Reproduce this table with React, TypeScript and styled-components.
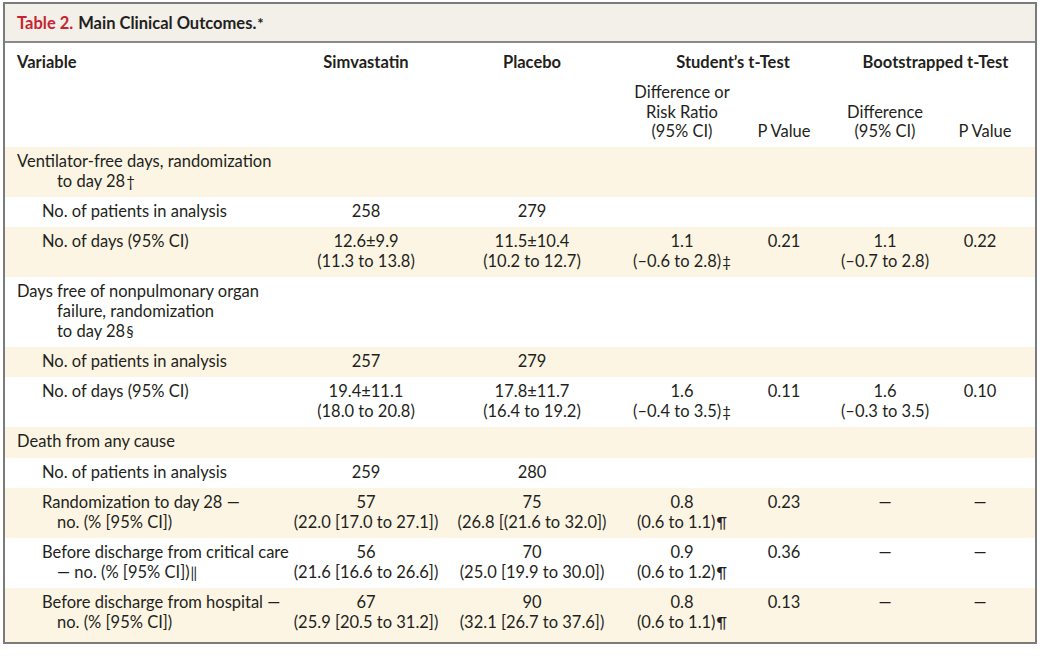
import React from 'react';
import styled, { createGlobalStyle } from 'styled-components';

const GlobalStyle = createGlobalStyle`
  html, body {
    margin: 0;
    padding: 0;
    background: #ffffff;
  }
  body {
    font-family: 'Lato', 'Liberation Sans', sans-serif;
    color: #231f20;
  }
`;

type Level = 'top' | 'sub';

interface RowData {
  level: Level;
  label: React.ReactNode;
  values?: React.ReactNode[];
}

const Frame = styled.div`
  box-sizing: border-box;
  width: 1034px;
  margin: 2px 0 0 3px;
  border: 2px solid #7b7b7b;
  background: #ffffff;
`;

const TitleBar = styled.div`
  box-sizing: border-box;
  height: 39px;
  padding: 0 12px;
  display: flex;
  align-items: center;
  background: #f3efe9;
  border-bottom: 2px solid #8a8a8a;
  font-size: 16.5px;
  font-weight: 700;
  color: #231f20;
`;

const TableNo = styled.span`
  color: #c8242f;
  margin-right: 5px;
`;

const Grid = styled.table`
  width: 100%;
  border-collapse: collapse;
  table-layout: fixed;
  font-size: 16.5px;
  line-height: 19.75px;
`;

const HeadCell = styled.th<{ $align?: 'left' | 'center'; $shift?: number }>`
  font-weight: 700;
  text-align: ${p => p.$align ?? 'center'};
  vertical-align: top;
  padding: 10px 0 0 ${p => p.$shift ?? 0}px;
  white-space: nowrap;
`;

const SubHeadCell = styled.th<{ $pad?: number }>`
  font-weight: 400;
  text-align: center;
  vertical-align: bottom;
  padding: 10px ${p => p.$pad ?? 0}px 5px 0;
  white-space: nowrap;
`;

const Row = styled.tr<{ $striped: boolean }>`
  background: ${p => (p.$striped ? '#fcf5e4' : '#ffffff')};
`;

const LabelCell = styled.td<{ $level: Level }>`
  padding: 5px 0 5.5px 52px;
  text-indent: ${p => (p.$level === 'top' ? -40 : -15)}px;
  vertical-align: top;
  text-align: left;
  white-space: nowrap;
`;

const ValueCell = styled.td<{ $pad?: number }>`
  padding: 5px ${p => p.$pad ?? 0}px 5.5px 0;
  vertical-align: top;
  text-align: center;
  white-space: nowrap;
`;

const Mark = styled.span`
  font-size: 15px;
  margin-left: 1px;
`;

const BottomGap = styled.div`
  height: 4px;
  background: #fcf5e4;
`;

const rows: RowData[] = [
  {
    level: 'top',
    label: (
      <>
        Ventilator-free days, randomization<br />to day 28<Mark>†</Mark>
      </>
    ),
  },
  { level: 'sub', label: 'No. of patients in analysis', values: ['258', '279', '', '', '', ''] },
  {
    level: 'sub',
    label: 'No. of days (95% CI)',
    values: [
      <>12.6±9.9<br />(11.3 to 13.8)</>,
      <>11.5±10.4<br />(10.2 to 12.7)</>,
      <>1.1<br />(–0.6 to 2.8)<Mark>‡</Mark></>,
      '0.21',
      <>1.1<br />(–0.7 to 2.8)</>,
      '0.22',
    ],
  },
  {
    level: 'top',
    label: (
      <>
        Days free of nonpulmonary organ<br />failure, randomization<br />to day 28<Mark>§</Mark>
      </>
    ),
  },
  { level: 'sub', label: 'No. of patients in analysis', values: ['257', '279', '', '', '', ''] },
  {
    level: 'sub',
    label: 'No. of days (95% CI)',
    values: [
      <>19.4±11.1<br />(18.0 to 20.8)</>,
      <>17.8±11.7<br />(16.4 to 19.2)</>,
      <>1.6<br />(–0.4 to 3.5)<Mark>‡</Mark></>,
      '0.11',
      <>1.6<br />(–0.3 to 3.5)</>,
      '0.10',
    ],
  },
  { level: 'top', label: 'Death from any cause' },
  { level: 'sub', label: 'No. of patients in analysis', values: ['259', '280', '', '', '', ''] },
  {
    level: 'sub',
    label: (
      <>
        Randomization to day 28 —<br />no. (% [95% CI])
      </>
    ),
    values: [
      <>57<br />(22.0 [17.0 to 27.1])</>,
      <>75<br />(26.8 [(21.6 to 32.0])</>,
      <>0.8<br />(0.6 to 1.1)<Mark>¶</Mark></>,
      '0.23',
      '—',
      '—',
    ],
  },
  {
    level: 'sub',
    label: (
      <>
        Before discharge from critical care<br />— no. (% [95% CI])<Mark>‖</Mark>
      </>
    ),
    values: [
      <>56<br />(21.6 [16.6 to 26.6])</>,
      <>70<br />(25.0 [19.9 to 30.0])</>,
      <>0.9<br />(0.6 to 1.2)<Mark>¶</Mark></>,
      '0.36',
      '—',
      '—',
    ],
  },
  {
    level: 'sub',
    label: (
      <>
        Before discharge from hospital —<br />no. (% [95% CI])
      </>
    ),
    values: [
      <>67<br />(25.9 [20.5 to 31.2])</>,
      <>90<br />(32.1 [26.7 to 37.6])</>,
      <>0.8<br />(0.6 to 1.1)<Mark>¶</Mark></>,
      '0.13',
      '—',
      '—',
    ],
  },
];

const colWidths = [285, 152, 180, 120, 84, 118, 91];

export default function App() {
  return (
    <>
      <GlobalStyle />
      <Frame>
        <TitleBar>
          <TableNo>Table 2.</TableNo>
          Main Clinical Outcomes.<Mark>*</Mark>
        </TitleBar>
        <Grid>
          <colgroup>
            {colWidths.map((w, i) => (
              <col key={i} style={{ width: w }} />
            ))}
          </colgroup>
          <thead>
            <tr>
              <HeadCell $align="left" rowSpan={2} $shift={12}>Variable</HeadCell>
              <HeadCell>Simvastatin</HeadCell>
              <HeadCell>Placebo</HeadCell>
              <HeadCell colSpan={2} $shift={18}>Student’s t-Test</HeadCell>
              <HeadCell colSpan={2} $shift={10}>Bootstrapped t-Test</HeadCell>
            </tr>
            <tr>
              <SubHeadCell />
              <SubHeadCell />
              <SubHeadCell>
                Difference or<br />Risk Ratio<br />(95% CI)
              </SubHeadCell>
              <SubHeadCell>P Value</SubHeadCell>
              <SubHeadCell>
                Difference<br />(95% CI)
              </SubHeadCell>
              <SubHeadCell $pad={9}>P Value</SubHeadCell>
            </tr>
          </thead>
          <tbody>
            {rows.map((r, i) => (
              <Row key={i} $striped={i % 2 === 0}>
                <LabelCell $level={r.level}>{r.label}</LabelCell>
                {(r.values ?? ['', '', '', '', '', '']).map((v, j) => (
                  <ValueCell key={j} $pad={j === 5 ? 19 : 0}>
                    {v}
                  </ValueCell>
                ))}
              </Row>
            ))}
          </tbody>
        </Grid>
        <BottomGap />
      </Frame>
    </>
  );
}
